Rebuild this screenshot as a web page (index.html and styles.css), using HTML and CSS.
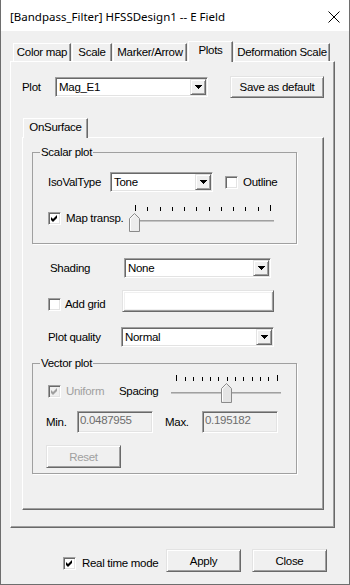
FILE: index.html
```html
<!DOCTYPE html>
<html>
<head>
  <meta charset="utf-8">
  <title>E Field</title>
  <link rel="stylesheet" href="styles.css">
</head>
<body>
<div class="window">
  <div class="titlebar">
    <span class="title">[Bandpass_Filter] HFSSDesign1 -- E Field</span>
    <svg class="close" width="12" height="12" viewBox="0 0 12 12"><path d="M0.5 0.5 L11.5 11.5 M11.5 0.5 L0.5 11.5" stroke="#000" stroke-width="1"/></svg>
  </div>

  <div class="client">
    <div class="tabstrip">
      <div class="tab t-color">Color map</div>
      <div class="tab t-scale">Scale</div>
      <div class="tab t-marker">Marker/Arrow</div>
      <div class="tab t-plots active">Plots</div>
      <div class="tab t-deform">Deformation Scale</div>
    </div>

    <div class="tabpanel">
      <div class="row plotrow">
        <span class="w-plotlbl">Plot</span>
        <div class="combo w-plot">
          <span class="value">Mag_E1</span>
          <span class="drop"><svg width="7" height="4" viewBox="0 0 7 4" shape-rendering="crispEdges"><path d="M0 0h7v1h-1v1h-1v1h-1v1h-1v-1h-1v-1h-1v-1h-1z" fill="#000"/></svg></span>
        </div>
        <button class="btn save">Save as default</button>
      </div>

      <div class="subtabs">
        <div class="tab sub">OnSurface</div>
      </div>

      <div class="subpanel">
        <fieldset class="group scalar">
          <legend>Scalar plot</legend>
          <div class="gbody sbody">
            <div class="row srow1">
              <span class="w-iso">IsoValType</span>
              <div class="combo w-tone">
                <span class="value">Tone</span>
                <span class="drop"><svg width="7" height="4" viewBox="0 0 7 4" shape-rendering="crispEdges"><path d="M0 0h7v1h-1v1h-1v1h-1v1h-1v-1h-1v-1h-1v-1h-1z" fill="#000"/></svg></span>
              </div>
              <span class="check ml-outline"></span>
              <span class="cblabel">Outline</span>
            </div>
            <div class="row srow2">
              <span class="check"><svg width="7" height="7" viewBox="0 0 7 7"><path d="M0 2 L2 4 L6 0 L6 3 L2 7 L0 5 Z" fill="#000"/></svg></span>
              <span class="cblabel w-transp">Map transp.</span>
              <svg class="slider" width="148" height="28" viewBox="0 0 148 28" shape-rendering="crispEdges">
                <g fill="#000">
                  <rect x="7" y="1" width="1" height="6"/>
                  <rect x="19" y="3" width="1" height="4"/>
                  <rect x="32" y="3" width="1" height="4"/>
                  <rect x="44" y="3" width="1" height="4"/>
                  <rect x="56" y="3" width="1" height="4"/>
                  <rect x="68" y="3" width="1" height="4"/>
                  <rect x="81" y="3" width="1" height="4"/>
                  <rect x="93" y="3" width="1" height="4"/>
                  <rect x="105" y="3" width="1" height="4"/>
                  <rect x="117" y="3" width="1" height="4"/>
                  <rect x="130" y="3" width="1" height="4"/>
                  <rect x="142" y="1" width="1" height="6"/>
                </g>
                <rect x="2" y="16" width="144" height="1" fill="#a0a0a0"/>
                <rect x="2" y="17" width="144" height="1" fill="#c4c4c4"/>
                <path d="M1.5 27.5 V14.5 L6.5 9.5 L11.5 14.5 V27.5 Z" fill="#ececec" stroke="#8a8a8a" shape-rendering="auto"/>
                <path d="M2.5 26.5 V14.9 L6.5 10.9" fill="none" stroke="#fff" shape-rendering="auto"/>
              </svg>
            </div>
          </div>
        </fieldset>

        <div class="row r-shading">
          <span class="w-shading">Shading</span>
          <div class="combo w-none">
            <span class="value">None</span>
            <span class="drop"><svg width="7" height="4" viewBox="0 0 7 4" shape-rendering="crispEdges"><path d="M0 0h7v1h-1v1h-1v1h-1v1h-1v-1h-1v-1h-1v-1h-1z" fill="#000"/></svg></span>
          </div>
        </div>

        <div class="row r-grid">
          <span class="check ml16 mt8"></span>
          <span class="cblabel w-grid mt8">Add grid</span>
          <button class="btn swatch"><span class="sw"></span></button>
        </div>

        <div class="row r-quality">
          <span class="w-quality">Plot quality</span>
          <div class="combo w-normal">
            <span class="value">Normal</span>
            <span class="drop"><svg width="7" height="4" viewBox="0 0 7 4" shape-rendering="crispEdges"><path d="M0 0h7v1h-1v1h-1v1h-1v1h-1v-1h-1v-1h-1v-1h-1z" fill="#000"/></svg></span>
          </div>
        </div>

        <fieldset class="group vector">
          <legend>Vector plot</legend>
          <div class="gbody vbody">
            <div class="row vrow1">
              <span class="check dis mt10"><svg width="7" height="7" viewBox="0 0 7 7"><path d="M0 2 L2 4 L6 0 L6 3 L2 7 L0 5 Z" fill="#a0a0a0"/></svg></span>
              <span class="cblabel w-uniform mt10 grey">Uniform</span>
              <span class="w-spacing mt10">Spacing</span>
              <svg class="slider" width="112" height="28" viewBox="0 0 112 28" shape-rendering="crispEdges">
                <g fill="#000">
                  <rect x="6" y="0" width="1" height="6"/>
                  <rect x="15" y="2" width="1" height="4"/>
                  <rect x="23" y="2" width="1" height="4"/>
                  <rect x="32" y="2" width="1" height="4"/>
                  <rect x="40" y="2" width="1" height="4"/>
                  <rect x="48" y="2" width="1" height="4"/>
                  <rect x="57" y="2" width="1" height="4"/>
                  <rect x="65" y="2" width="1" height="4"/>
                  <rect x="73" y="2" width="1" height="4"/>
                  <rect x="82" y="2" width="1" height="4"/>
                  <rect x="90" y="2" width="1" height="4"/>
                  <rect x="98" y="2" width="1" height="4"/>
                  <rect x="107" y="0" width="1" height="6"/>
                </g>
                <rect x="1" y="17" width="110" height="1" fill="#a0a0a0"/>
                <rect x="1" y="18" width="110" height="1" fill="#c4c4c4"/>
                <path d="M51.5 27.5 V13.5 L56.5 8.5 L61.5 13.5 V27.5 Z" fill="#e4e4e4" stroke="#8a8a8a" shape-rendering="auto"/>
                <path d="M52.5 26.5 V13.9 L56.5 9.9" fill="none" stroke="#fff" shape-rendering="auto"/>
              </svg>
            </div>
            <div class="row vrow2">
              <span class="w-min">Min.</span>
              <div class="field">0.0487955</div>
              <span class="w-max">Max.</span>
              <div class="field">0.195182</div>
            </div>
            <div class="row vrow3">
              <button class="btn reset" disabled>Reset</button>
            </div>
          </div>
        </fieldset>
      </div>
    </div>

    <div class="row footer">
      <span class="check ml-real mt8"><svg width="7" height="7" viewBox="0 0 7 7"><path d="M0 2 L2 4 L6 0 L6 3 L2 7 L0 5 Z" fill="#000"/></svg></span>
      <span class="cblabel w-real mt8">Real time mode</span>
      <button class="btn">Apply</button>
      <button class="btn close-btn">Close</button>
    </div>
  </div>
</div>
</body>
</html>
```

FILE: styles.css
```css
html, body {
  margin: 0;
  padding: 0;
}
body {
  font-family: "Liberation Sans", Arial, sans-serif;
  font-size: 11.5px;
  letter-spacing: -0.3px;
  color: #000;
  background: #f0f0f0;
}

.window {
  box-sizing: border-box;
  width: 350px;
  height: 585px;
  border: 1px solid #6e6e6e;
  border-top: 0;
  background: #f0f0f0;
}

.titlebar {
  box-sizing: border-box;
  height: 31px;
  padding: 2px 9px 0 9px;
  background: #fff;
  display: flex;
  align-items: center;
}
.title {
  font-family: "Noto Sans", sans-serif;
  font-size: 11.5px;
  letter-spacing: 0;
}
.close {
  margin-left: auto;
}

.client {
  padding: 10px 0 0 9px;
}

.row {
  display: flex;
  align-items: center;
}

/* tabs */
.tabstrip {
  display: flex;
  align-items: flex-end;
  height: 20px;
  padding-left: 3px;
  position: relative;
  z-index: 1;
}
.tab {
  box-sizing: border-box;
  height: 18px;
  margin-right: 1px;
  border-top: 1px solid #fff;
  border-left: 1px solid #fff;
  border-right: 1px solid #696969;
  box-shadow: inset -1px 0 0 #a0a0a0;
  text-align: center;
  line-height: 16px;
  white-space: nowrap;
}
.tab.active {
  height: 21px;
  margin-bottom: -1px;
  background: #f0f0f0;
  line-height: 16px;
}
.t-color { width: 58px; }
.t-scale { width: 40px; }
.t-marker { width: 74px; }
.t-plots { width: 45px; }
.t-deform { width: 96px; }

.tabpanel, .subpanel {
  box-sizing: border-box;
  border: 1px solid;
  border-color: #fff #696969 #696969 #fff;
  box-shadow: inset -1px -1px 0 #a0a0a0;
}
.tabpanel {
  width: 325px;
  height: 467px;
  padding-left: 11px;
}

.plotrow {
  margin-top: 14px;
  height: 22px;
}
.w-plotlbl { width: 33px; }

/* combo boxes */
.combo {
  box-sizing: border-box;
  height: 20px;
  padding: 1px;
  display: flex;
  align-items: center;
  background: #fff;
  border: 1px solid;
  border-color: #a0a0a0 #fff #fff #a0a0a0;
  box-shadow: inset 1px 1px 0 #696969, inset -1px -1px 0 #e3e3e3;
}
.combo .value {
  flex: 1;
  padding-left: 2px;
  line-height: 16px;
}
.drop {
  box-sizing: border-box;
  width: 16px;
  height: 16px;
  display: flex;
  align-items: center;
  justify-content: center;
  background: #f0f0f0;
  border: 1px solid;
  border-color: #e3e3e3 #696969 #696969 #e3e3e3;
  box-shadow: inset 1px 1px 0 #fff, inset -1px -1px 0 #a0a0a0;
}
.w-plot { width: 153px; }
.w-tone { width: 103px; }
.w-none { width: 147px; }
.w-normal { width: 153px; }

/* buttons */
.btn {
  box-sizing: border-box;
  width: 75px;
  height: 23px;
  margin: 0;
  padding: 0;
  font: inherit;
  letter-spacing: inherit;
  color: #000;
  background: #f0f0f0;
  border: 1px solid;
  border-color: #e3e3e3 #696969 #696969 #e3e3e3;
  box-shadow: inset 1px 1px 0 #fff, inset -1px -1px 0 #a0a0a0;
  appearance: none;
}
.save {
  width: 94px;
  height: 22px;
  margin-left: 22px;
}
.swatch {
  width: 152px;
  height: 22px;
  padding: 2px;
  display: flex;
}
.swatch .sw {
  flex: 1;
  background: #fff;
}
.reset {
  margin-left: -2px;
  color: #a0a0a0;
}
.close-btn {
  margin-left: 11px;
}

/* inner tab */
.subtabs {
  display: flex;
  align-items: flex-end;
  height: 19px;
  margin-top: 20px;
  padding-left: 1px;
  position: relative;
  z-index: 1;
}
.tab.sub {
  width: 65px;
  height: 20px;
  margin-bottom: -1px;
  background: #f0f0f0;
  line-height: 17px;
}
.subpanel {
  width: 302px;
  height: 373px;
  padding-left: 9px;
}

/* group boxes */
.group {
  box-sizing: border-box;
  width: 265px;
  min-width: 0;
  margin: 0;
  padding: 0;
  border: 1px solid #a0a0a0;
  box-shadow: 1px 1px 0 #fff;
}
.group legend {
  margin-left: 7px;
  padding: 0 1px;
  line-height: 13px;
}
.gbody {
  box-sizing: border-box;
  padding-left: 15px;
}
.scalar { margin-top: 8px; }
.sbody {
  height: 84px;
  padding-top: 13px;
}
.vector { margin-top: 10px; }
.vbody {
  height: 103px;
  padding-top: 5px;
}

/* check boxes */
.check {
  box-sizing: border-box;
  flex: none;
  width: 13px;
  height: 13px;
  display: flex;
  align-items: center;
  justify-content: center;
  background: #fff;
  border: 1px solid;
  border-color: #a0a0a0 #fff #fff #a0a0a0;
  box-shadow: inset 1px 1px 0 #696969, inset -1px -1px 0 #e3e3e3;
}
.check.dis {
  background: #f0f0f0;
}
.cblabel {
  margin-left: 5px;
  line-height: 13px;
}
.grey { color: #a0a0a0; }

.srow1 { height: 20px; }
.w-iso { width: 62px; }
.ml-outline { margin-left: 12px; }
.srow2 {
  height: 28px;
  margin-top: 12px;
}
.w-transp { width: 62px; }
.slider { flex: none; display: block; }

.r-shading {
  height: 20px;
  margin-top: 14px;
}
.w-shading {
  width: 74px;
  margin-left: 18px;
}

.r-grid {
  height: 22px;
  margin-top: 12px;
  align-items: flex-start;
}
.w-grid {
  width: 57px;
  margin-left: 4px;
}
.ml16 { margin-left: 16px; }
.mt8 { margin-top: 8px; }
.mt10 { margin-top: 10px; }

.r-quality {
  height: 20px;
  margin-top: 15px;
}
.w-quality {
  width: 73px;
  margin-left: 16px;
}

.vrow1 {
  height: 28px;
  align-items: flex-start;
}
.w-uniform { width: 53px; }
.w-spacing {
  width: 51px;
  line-height: 13px;
}
.vrow2 {
  height: 22px;
  margin-top: 8px;
}
.w-min {
  width: 31px;
  margin-left: -2px;
}
.w-max {
  width: 37px;
  margin-left: 12px;
}
.field {
  box-sizing: border-box;
  width: 76px;
  height: 22px;
  padding: 2px 0 0 2px;
  line-height: 13px;
  color: #6d6d6d;
  background: #f0f0f0;
  border: 1px solid;
  border-color: #a0a0a0 #fff #fff #a0a0a0;
  box-shadow: inset 1px 1px 0 #696969, inset -1px -1px 0 #e3e3e3;
}
.vrow3 {
  margin-top: 12px;
}

.footer {
  height: 23px;
  margin-top: 21px;
  align-items: flex-start;
}
.ml-real { margin-left: 53px; }
.w-real {
  width: 84px;
  margin-left: 6px;
}
```
